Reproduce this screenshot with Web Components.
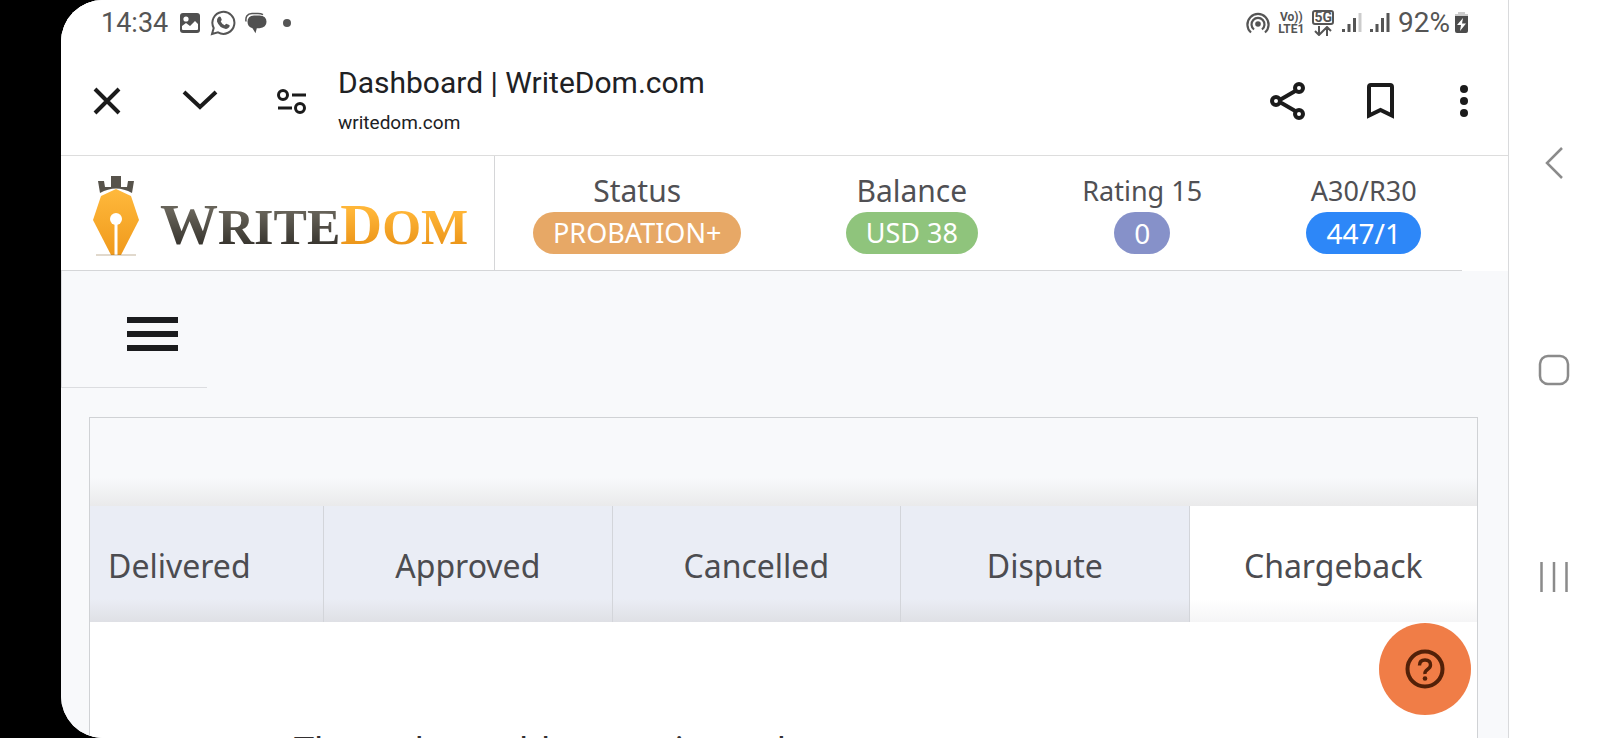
<!DOCTYPE html>
<html lang="en">
<head>
<meta charset="utf-8">
<meta name="viewport" content="width=device-width, initial-scale=1">
<title>Dashboard | WriteDom.com</title>
<style>
  html, body { margin: 0; height: 100%; background: #000; }
  body { overflow: hidden; }
</style>
</head>
<body>
<device-frame>
  <status-bar></status-bar>
  <browser-bar heading="Dashboard | WriteDom.com" site="writedom.com"></browser-bar>
  <site-header>
    <stat-item label="Status" value="PROBATION+" style="--pill:#e7a866"></stat-item>
    <stat-item label="Balance" value="USD 38" style="--pill:#8fc47c"></stat-item>
    <stat-item compact label="Rating 15" value="0" style="--pill:#8691c9"></stat-item>
    <stat-item compact label="A30/R30" value="447/1" style="--pill:#2d87f8"></stat-item>
  </site-header>
  <menu-strip></menu-strip>
  <order-panel>
    <tab-item slot="tabs">Delivered</tab-item>
    <tab-item slot="tabs">Approved</tab-item>
    <tab-item slot="tabs">Cancelled</tab-item>
    <tab-item slot="tabs">Dispute</tab-item>
    <tab-item slot="tabs" active>Chargeback</tab-item>
    The orders table contains only
  </order-panel>
  <help-button slot="overlay"></help-button>
  <system-nav slot="nav"></system-nav>
</device-frame>

<script>
const define = (name, html, setup) => customElements.define(name, class extends HTMLElement {
  constructor() {
    super();
    this.attachShadow({ mode: 'open' }).innerHTML = html;
  }
  connectedCallback() { if (setup) setup(this, this.shadowRoot); }
});

define('device-frame', `
<style>
  :host { display: flex; height: 100vh; padding-left: 61px; box-sizing: border-box; background: #000; }
  .screen { flex: 1; display: flex; min-width: 0; background: #fff; border-radius: 42px 0 0 42px; overflow: hidden; }
  main { flex: 1; min-width: 0; display: flex; flex-direction: column; position: relative; border-right: 1px solid #d9dadc; background: #f8f9fb; }
</style>
<div class="screen"><main><slot></slot><slot name="overlay"></slot></main><slot name="nav"></slot></div>`);

define('status-bar', `
<style>
  :host { flex: none; display: flex; align-items: center; justify-content: space-between; height: 46px; padding: 0 39px 0 40px; background: #fff; color: #555; font: 27px/30px Roboto, sans-serif; }
  div { display: flex; align-items: center; }
  svg { display: block; }
  .left { gap: 9px; } .left .dot { margin-left: 6px; }
  .left .clock { margin-right: 2px; }
  .right { gap: 8px; }
  .pct { font-size: 28px; margin-right: -4px; }
  .stack { display: block; font: bold 12px/12px Roboto, sans-serif; text-align: center; }
  .net { display: grid; justify-items: center; gap: 1px; }
  .net b { border: 2px solid #555; border-radius: 3px; font: bold 14px/11px Roboto, sans-serif; padding: 0; }
</style>
<div class="left">
  <span class="clock">14:34</span>
  <svg width="22" height="22" viewBox="0 0 22 22"><rect x="1" y="1" width="20" height="20" rx="3" fill="#505050"/><circle cx="7" cy="7" r="2.6" fill="#fff"/><path d="M3 17v-3l4-3 4 3 5-5 3 3v5q0 1-1 1H4q-1 0-1-1z" fill="#fff"/></svg>
  <svg width="26" height="26" viewBox="0 0 26 26"><path d="M2 24l1.700-6A11 11 0 1 1 8 22.400z" fill="none" stroke="#555" stroke-width="2"/><path d="M8.500 7q1.500-1.200 2.300.3l.9 2.200q.3.700-1 2 1.200 2.600 4.100 3.800 1.400-1.800 2-1.400l2.500 1.200q.8.500 0 2-1.200 2-3.500 1.800-6.500-1-8.800-7.400-.5-3 1.500-4.500z" fill="#555"/></svg>
  <svg width="22" height="22" viewBox="0 0 22 22"><path d="M1 9.500Q0 2 7 1.500h6q3 0 5 1.200" fill="none" stroke="#555" stroke-width="1.500"/><path d="M9 3.500h5.500q7 .5 7 6.300t-7 6.500h-2.700l-1.300 5-3-5Q2.500 15 2.500 9.800q0-5.800 6.500-6.300z" fill="#505050"/></svg>
  <svg class="dot" width="10" height="10" viewBox="0 0 10 10"><circle cx="5" cy="5" r="4" fill="#555"/></svg>
</div>
<div class="right">
  <svg width="24" height="24" viewBox="0 0 24 24" fill="none" stroke="#555" stroke-width="2.200"><circle cx="12" cy="13" r="2.800" fill="#555" stroke="none"/><path d="M8 18.500a6.500 6.500 0 1 1 8 0M5 21.500a10.600 10.600 0 1 1 14 0"/></svg>
  <span class="stack">Vo))<br>LTE1</span>
  <span class="net"><b>5G</b><svg width="18" height="10" viewBox="0 0 18 10" fill="none" stroke="#555" stroke-width="2"><path d="M5 0v8M1 5l4 4 4-4M13 10V2M9 5l4-4 4 4"/></svg></span>
  <svg width="20" height="20" viewBox="0 0 20 20"><path d="M0 16h3v3H0zM5.500 11h3v8h-3zM11 5h3v14h-3z" fill="#555"/><path d="M16.500 0h3v19h-3z" fill="#ccc"/></svg>
  <svg width="20" height="20" viewBox="0 0 20 20"><path d="M0 16h3v3H0zM5.500 11h3v8h-3zM11 5h3v14h-3zM16.500 0h3v19h-3z" fill="#555"/></svg>
  <span class="pct">92%</span>
  <svg width="15" height="22" viewBox="0 0 15 22"><path d="M4 0h7v2h3v3H1V2h3z" fill="#ccc"/><path d="M1 4h13v15q0 2-2 2H3q-2 0-2-2z" fill="#4c4c4c"/><path d="M9 6l-6 7h4l-1 6 6-7.500H8z" fill="#fff"/></svg>
</div>`);

define('browser-bar', `
<style>
  :host { flex: none; display: flex; align-items: center; height: 110px; padding: 0 36px 0 29px; box-sizing: border-box; border-bottom: 1px solid #ddd; background: #fff; color: #202124; font-family: Roboto, sans-serif; }
  button { border: 0; padding: 0; background: none; display: block; color: inherit; }
  svg { display: block; fill: none; stroke: #1b1b1b; stroke-width: 4; }
  .nav { display: flex; gap: 58px; margin-right: 30px; }
  .text { flex: 1; min-width: 0; }
  h1 { margin: 0; font: 400 30px/40px Roboto, sans-serif; white-space: nowrap; }
  a { display: block; color: inherit; text-decoration: none; font-size: 19px; line-height: 32px; margin-top: 4px; }
  .actions { display: flex; gap: 56px; }
</style>
<div class="nav">
  <button aria-label="Close"><svg width="34" height="34" viewBox="0 0 34 34"><path d="M5 5l24 24M29 5L5 29"/></svg></button>
  <button aria-label="Minimise"><svg width="36" height="34" viewBox="0 0 36 34"><path d="M2 8l16 15L34 8"/></svg></button>
  <button aria-label="Site settings"><svg width="32" height="34" viewBox="0 0 32 34" style="stroke-width:3"><circle cx="7" cy="11" r="4.500"/><path d="M16 11h14M2 24h14"/><circle cx="24" cy="24" r="4.500"/></svg></button>
</div>
<div class="text"><h1></h1><a href="#"></a></div>
<div class="actions">
  <button aria-label="Share"><svg width="40" height="40" viewBox="0 0 40 40"><path d="M29 9L10 20l19 11"/><circle cx="31" cy="7" r="4" fill="#fff"/><circle cx="8" cy="20" r="4" fill="#fff"/><circle cx="31" cy="33" r="4" fill="#fff"/></svg></button>
  <button aria-label="Bookmark"><svg width="36" height="40" viewBox="0 0 36 40"><path d="M5 34.500V6q0-2 2-2h19q2 0 2 2v28.500L16.500 29z"/></svg></button>
  <button aria-label="More"><svg width="16" height="40" viewBox="0 0 16 40" style="fill:#1b1b1b;stroke:none"><circle cx="8" cy="8" r="4"/><circle cx="8" cy="20" r="4"/><circle cx="8" cy="32" r="4"/></svg></button>
</div>`, (el, root) => {
  root.querySelector('h1').textContent = el.getAttribute('heading');
  root.querySelector('a').textContent = el.getAttribute('site');
});

define('brand-logo', `
<style>
  :host { display: block; }
  a { display: flex; align-items: center; gap: 20px; text-decoration: none; font: bold 50px/60px "Liberation Serif", serif; }
  svg { display: block; flex: none; }
  .word { display: flex; align-items: baseline; padding-top: 20px; }
  .cap { font-size: 58px; }
  .dark, .gold { background: linear-gradient(#68645a 25%, #38352f 80%); -webkit-background-clip: text; background-clip: text; color: transparent; }
  .gold { background-image: linear-gradient(#ffb638 25%, #ec961a 80%); }
</style>
<a href="#" aria-label="WriteDom home">
  <svg width="48" height="80" viewBox="0 0 48 80">
    <defs><linearGradient id="g" x1="0" y1="0" x2="0" y2="1"><stop offset="0" stop-color="#ffb93c"/><stop offset="1" stop-color="#f09a1c"/></linearGradient></defs>
    <path d="M6 5h6l1 6h6V0h10v11h6l1-6h6l-2 12Q24 8 8 17z" fill="#57534b"/>
    <path d="M24 13l15 7 8 24-18 35H19L1 44l8-24z" fill="url(#g)"/>
    <circle cx="24" cy="43" r="6" fill="#fff"/><path d="M22.500 44h3v35h-3z" fill="#fff"/>
    <path d="M4 79h40" stroke="#8a6a3a" stroke-opacity=".5"/>
  </svg>
  <span class="word"><span class="dark"><span class="cap">W</span>RITE</span><span class="gold"><span class="cap">D</span>OM</span></span>
</a>`);

define('site-header', `
<style>
  :host { flex: none; display: flex; height: 115px; background: linear-gradient(#d5d6d8, #d5d6d8) 0 100% / calc(100% - 46px) 1px no-repeat #fff; }
  .brand { width: 434px; padding: 19px 0 0 31px; box-sizing: border-box; border-right: 1px solid #d5d6d8; }
  .stats { flex: 1; display: flex; justify-content: space-between; padding: 16px 87px 0 38px; }
</style>
<div class="brand"><brand-logo></brand-logo></div>
<div class="stats"><slot></slot></div>`);

define('stat-item', `
<style>
  :host { display: flex; flex-direction: column; align-items: center; gap: 2px; color: #505054; font: 30px/38px "Noto Sans", sans-serif; white-space: nowrap; }
  :host([compact]) .label { font-size: 27px; }
  .value { padding: 0 20px; border-radius: 21px; background: var(--pill); color: #fff; font-size: 27px; line-height: 42px; }
  :host([compact]) .value { font-size: 28px; }
</style>
<span class="label"></span><span class="value"></span>`, (el, root) => {
  root.querySelector('.label').textContent = el.getAttribute('label');
  root.querySelector('.value').textContent = el.getAttribute('value');
});

define('menu-strip', `
<style>
  :host { flex: none; display: block; }
  nav { width: 146px; height: 117px; box-sizing: border-box; border: solid #dcdde0; border-width: 0 0 1px 1px; padding: 46px 0 0 65px; }
  button { border: 0; padding: 0; background: none; display: grid; gap: 8px; }
  i { width: 51px; height: 6px; background: #1b1c1e; }
</style>
<nav><button aria-label="Menu"><i></i><i></i><i></i></button></nav>`);

define('order-panel', `
<style>
  :host { flex: 1 0 auto; display: flex; flex-direction: column; margin: 29px 30px 0 28px; border: solid #d0d2d5; border-width: 1px 1px 0; color: #332f30; font: 36px/52px "Noto Sans", sans-serif; }
  .space { height: 88px; background: linear-gradient(#f8f9fb 68%, #eaeaeb); }
  .tabs { display: flex; justify-content: flex-end; height: 116px; overflow: hidden; }
  .body { flex: 1; padding: 102px 200px 0 204px; background: #fff; white-space: nowrap; }
</style>
<div class="space"></div>
<div class="tabs" role="tablist"><slot name="tabs"></slot></div>
<div class="body"><slot></slot></div>`);

define('tab-item', `
<style>
  :host { display: block; flex: 0 0 20.8%; --tab: #eaedf5; --edge: #dfe0e5; }
  :host([active]) { --tab: #fff; --edge: #f5f5f6; }
  button { width: 100%; height: 100%; border: 0; border-left: 1px solid #d3d5da; padding: 4px 0 0; background: linear-gradient(var(--tab) 80%, var(--edge)); color: #4c4c50; font: 32px/40px "Noto Sans", sans-serif; }
</style>
<button role="tab"><slot></slot></button>`);

define('help-button', `
<style>
  :host { position: absolute; right: 37px; bottom: 23px; }
  button { display: grid; place-items: center; width: 92px; height: 92px; border: 0; border-radius: 50%; padding: 0; background: #f07d47; }
</style>
<button aria-label="Help"><svg width="40" height="40" viewBox="0 0 40 40" fill="none" stroke="#522008" stroke-width="4"><circle cx="20" cy="20" r="17.500"/><path d="M14.500 16.500q0-5.500 5.500-5.500t5.500 5q0 2.500-3 4.500t-2.500 4.500" stroke-width="3.400"/><circle cx="20" cy="29.500" r="2.300" fill="#522008" stroke="none"/></svg></button>`);

define('system-nav', `
<style>
  :host { display: flex; flex-direction: column; align-items: center; justify-content: space-around; width: 91px; padding: 60px 2px 58px 0; box-sizing: border-box; background: #fff; }
  button { border: 0; padding: 0; background: none; }
  svg { display: block; fill: none; stroke: #8b8b8b; stroke-width: 2.500; }
</style>
<button aria-label="Back"><svg width="32" height="32" viewBox="0 0 32 32"><path d="M24 1L9 16l15 15"/></svg></button>
<button aria-label="Home"><svg width="32" height="32" viewBox="0 0 32 32"><rect x="2" y="2" width="28" height="28" rx="8"/></svg></button>
<button aria-label="Recent apps"><svg width="32" height="32" viewBox="0 0 32 32"><path d="M3.500 1v30M16 1v30M28.500 1v30"/></svg></button>`);
</script>
</body>
</html>
